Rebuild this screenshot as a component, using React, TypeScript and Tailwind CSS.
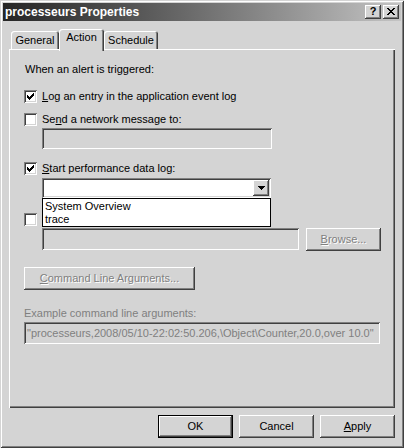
import React from 'react';

const raised = 'shadow-[inset_-1px_-1px_0_#404040,inset_1px_1px_0_#fff,inset_-2px_-2px_0_#808080]';
const sunken =
  'shadow-[inset_1px_1px_0_#808080,inset_-1px_-1px_0_#fff,inset_2px_2px_0_#404040,inset_-2px_-2px_0_#d4d4d4]';
const dim = 'text-[#808080] [text-shadow:1px_1px_0_#fff]';

const Check = ({ checked }: { checked?: boolean }) => (
  <div className={`w-[13px] h-[13px] bg-white shrink-0 ${sunken}`}>
    {checked && (
      <svg width="13" height="13" viewBox="0 0 13 13" shapeRendering="crispEdges">
        <path
          fill="#000"
          d="M9 3h1v1h-1z M8 4h2v1h-2z M3 5h1v1h-1z M7 5h3v1h-3z M3 6h2v1h-2z M6 6h3v1h-3z M3 7h5v1h-5z M4 8h3v1h-3z M5 9h1v1h-1z"
        />
      </svg>
    )}
  </div>
);

const CheckRow = ({ checked, label, className = '' }: { checked?: boolean; label?: React.ReactNode; className?: string }) => (
  <div className={`flex items-center h-[13px] gap-[5px] ${className}`}>
    <Check checked={checked} />
    {label && <span className="leading-[13px] whitespace-nowrap">{label}</span>}
  </div>
);

const Btn = ({ children, isDefault, disabled, className = '' }: { children: React.ReactNode; isDefault?: boolean; disabled?: boolean; className?: string }) => (
  <div
    className={`h-[23px] flex items-center justify-center leading-[13px] ${
      isDefault
        ? 'shadow-[inset_0_0_0_1px_#000,inset_-2px_-2px_0_#404040,inset_2px_2px_0_#fff,inset_-3px_-3px_0_#808080]'
        : raised
    } ${disabled ? dim : 'text-black'} ${className}`}>
    {children}
  </div>
);

const Tab = ({ label, active, w }: { label: string; active?: boolean; w: string }) => (
  <div
    className={`${w} flex justify-center rounded-t-[3px] bg-[#d4d4d4] shadow-[inset_1px_1px_0_#fff,inset_-1px_0_0_#404040,inset_-2px_0_0_#808080] ${
      active ? 'h-[22px] -mb-[2px] pt-[2px] relative z-10' : 'h-[18px] items-center'
    }`}>
    <span className="leading-[13px]">{label}</span>
  </div>
);

export default function App() {
  return (
    <div
      className={`w-[404px] h-[448px] bg-[#d4d4d4] text-[11px] text-black font-['Liberation_Sans',Arial,sans-serif] pt-[3px] px-[3px] shadow-[inset_1px_1px_0_#d4d4d4,inset_-1px_-1px_0_#404040,inset_2px_2px_0_#fff,inset_-2px_-2px_0_#808080]`}>
      {/* title bar */}
      <div className="h-[18px] flex items-center justify-between bg-gradient-to-r from-[#262626] to-[#c4c4c4] pl-[2px] pr-[2px]">
        <span className="text-white font-bold text-[12px] leading-[14px] pb-[1px]">processeurs Properties</span>
        <div className="flex gap-[2px]">
          <div className={`w-[16px] h-[14px] bg-[#d4d4d4] flex items-center justify-center ${raised}`}>
            <span className="font-bold text-[11px] leading-[11px] pb-[1px]">?</span>
          </div>
          <div className={`w-[16px] h-[14px] bg-[#d4d4d4] flex items-center justify-center ${raised}`}>
            <svg width="8" height="7" viewBox="0 0 8 7" shapeRendering="crispEdges" className="-mt-[1px]">
              <path
                fill="#000"
                d="M0 0h2v1h-2z M6 0h2v1h-2z M1 1h2v1h-2z M5 1h2v1h-2z M2 2h4v1h-4z M3 3h2v1h-2z M2 4h4v1h-4z M1 5h2v1h-2z M5 5h2v1h-2z M0 6h2v1h-2z M6 6h2v1h-2z"
              />
            </svg>
          </div>
        </div>
      </div>

      {/* tabs */}
      <div className="flex items-end mt-[8px] ml-[8px] h-[20px]">
        <Tab label="General" w="w-[48px]" />
        <Tab label="Action" w="w-[45px]" active />
        <Tab label="Schedule" w="w-[54px]" />
      </div>

      {/* panel */}
      <div className="ml-[6px] w-[386px] h-[359px] shadow-[inset_1px_1px_0_#fff,inset_-1px_-1px_0_#404040,inset_-2px_-2px_0_#808080] pt-[14px] pl-[15px]">
        <div className="leading-[13px] pl-[1px]">When an alert is triggered:</div>

        <CheckRow
          checked
          className="mt-[14px]"
          label={
            <>
              <u>L</u>og an entry in the application event log
            </>
          }
        />
        <CheckRow
          className="mt-[10px]"
          label={
            <>
              Se<u>n</u>d a network message to:
            </>
          }
        />
        <div className={`ml-[18px] mt-[2px] w-[230px] h-[21px] ${sunken}`} />

        <CheckRow
          checked
          className="mt-[13px]"
          label={
            <>
              <u>S</u>tart performance data log:
            </>
          }
        />
        <div className="relative ml-[18px] mt-[3px] w-[229px]">
          <div className={`h-[20px] bg-white flex justify-end items-start p-[2px] ${sunken}`}>
            <div className={`w-[16px] h-[16px] bg-[#d4d4d4] flex items-center justify-center ${raised}`}>
              <svg width="7" height="4" viewBox="0 0 7 4" shapeRendering="crispEdges">
                <path fill="#000" d="M0 0h7v1h-7z M1 1h5v1h-5z M2 2h3v1h-3z M3 3h1v1h-1z" />
              </svg>
            </div>
          </div>
          <div className="absolute left-0 right-0 top-full z-10 bg-white border border-black pt-[1px] h-[29px]">
            <div className="leading-[13px] pl-[2px]">System Overview</div>
            <div className="leading-[13px] pl-[2px]">trace</div>
          </div>
        </div>

        {/* label of this row is hidden under the open list */}
        <CheckRow className="mt-[15px]" />
        <div className="flex items-start mt-[2px] ml-[18px] gap-[7px]">
          <div className={`w-[257px] h-[22px] ${sunken}`} />
          <Btn disabled className="w-[75px]">
            <span>
              <u>B</u>rowse...
            </span>
          </Btn>
        </div>

        <Btn disabled className="mt-[16px] w-[171px]">
          <span>
            <u>C</u>ommand Line Arguments...
          </span>
        </Btn>

        <div className="mt-[17px] leading-[13px] text-[#808080]">Example command line arguments:</div>
        <div className={`mt-[2px] w-[356px] h-[22px] flex items-center pl-[3px] text-[#808080] whitespace-nowrap ${sunken}`}>
          {'"processeurs,2008/05/10-22:02:50.206,\\Object\\Counter,20.0,over 10.0"'}
        </div>
      </div>

      {/* dialog buttons */}
      <div className="flex justify-end gap-[6px] mt-[7px] pr-[6px]">
        <Btn isDefault className="w-[75px]">OK</Btn>
        <Btn className="w-[75px]">Cancel</Btn>
        <Btn className="w-[75px]">
          <span>
            <u>A</u>pply
          </span>
        </Btn>
      </div>
    </div>
  );
}
